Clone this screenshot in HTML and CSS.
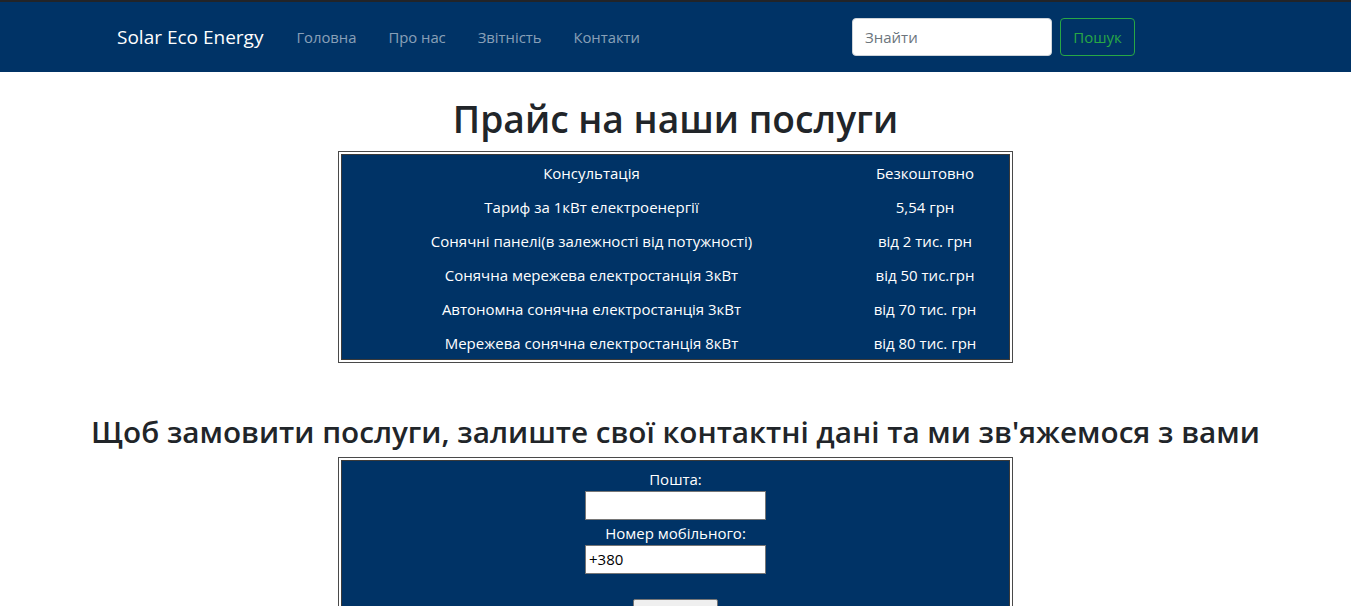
FILE: index.html
```html
<!DOCTYPE html>
<html lang="uk">
<head>
<meta charset="utf-8">
<title>Solar Eco Energy</title>
<link rel="stylesheet" href="styles.css">
</head>
<body>
<header class="navbar">
  <a class="brand" href="#">Solar Eco Energy</a>
  <nav class="nav">
    <a class="nav-link" href="#">Головна</a>
    <a class="nav-link" href="#">Про нас</a>
    <a class="nav-link" href="#">Звітність</a>
    <a class="nav-link" href="#">Контакти</a>
  </nav>
  <form class="search">
    <input class="search-input" type="search" placeholder="Знайти">
    <button class="search-btn" type="button">Пошук</button>
  </form>
</header>
<main class="main">
  <h1 class="title">Прайс на наши послуги</h1>
  <div class="frame">
    <table class="prices">
      <tr><td class="c1">Консультація</td><td class="c2">Безкоштовно</td></tr>
      <tr><td class="c1">Тариф за 1кВт електроенергії</td><td class="c2">5,54 грн</td></tr>
      <tr><td class="c1">Сонячні панелі(в залежності від потужності)</td><td class="c2">від 2 тис. грн</td></tr>
      <tr><td class="c1">Сонячна мережева електростанція 3кВт</td><td class="c2">від 50 тис.грн</td></tr>
      <tr><td class="c1">Автономна сонячна електростанція 3кВт</td><td class="c2">від 70 тис. грн</td></tr>
      <tr><td class="c1">Мережева сонячна електростанція 8кВт</td><td class="c2">від 80 тис. грн</td></tr>
    </table>
  </div>
  <h2 class="subtitle">Щоб замовити послуги, залиште свої контактні дані та ми зв'яжемося з вами</h2>
  <div class="frame">
    <form class="order">
      <label class="lbl" for="mail">Пошта:</label>
      <input class="fld" id="mail" type="text">
      <label class="lbl" for="phone">Номер мобільного:</label>
      <input class="fld" id="phone" type="text" value="+380">
      <button class="send" type="button">Надіслати</button>
    </form>
  </div>
</main>
</body>
</html>
```
FILE: styles.css
```css
html, body {
  margin: 0;
  padding: 0;
}
body {
  font-family: "Open Sans", "Noto Sans", sans-serif;
  color: #212529;
  background: #fff;
  font-size: 16px;
  line-height: 1.5;
}
.navbar {
  display: flex;
  align-items: center;
  height: 70px;
  background: #003366;
  border-top: 2px solid #222428;
  padding-left: 117px;
}
.brand {
  color: #fff;
  font-size: 19px;
  text-decoration: none;
  margin-right: 17px;
  white-space: nowrap;
}
.nav {
  display: flex;
}
.nav-link {
  color: rgba(255, 255, 255, 0.55);
  text-decoration: none;
  padding: 0 16px;
  font-size: 14.8px;
  white-space: nowrap;
}
.search {
  margin-left: auto;
  margin-right: 216px;
  display: flex;
  align-items: center;
}
.search-input {
  box-sizing: border-box;
  width: 200px;
  height: 38px;
  border: 1px solid #ced4da;
  border-radius: 4px;
  padding: 6px 12px;
  font-family: inherit;
  font-size: 15px;
}
.search-input::placeholder {
  color: #6c757d;
}
.search-btn {
  box-sizing: border-box;
  margin-left: 8px;
  width: 75px;
  height: 38px;
  padding: 6px 8px;
  border: 1px solid #28a745;
  border-radius: 4px;
  background: transparent;
  color: #28a745;
  font-family: inherit;
  font-size: 15px;
}
.main {
  display: flex;
  flex-direction: column;
  align-items: center;
}
.title {
  margin: 25px 0 9px;
  font-size: 37.2px;
  font-weight: 600;
  line-height: 1.2;
}
.frame {
  width: 667px;
  border: 1px solid #3a3a3a;
  box-shadow: 0 0 0 2px #fff, 0 0 0 3px #4a4a4a;
  background: #003366;
  color: #fff;
  margin-top: 3px;
}
.prices {
  width: 100%;
  border-collapse: collapse;
}
.prices td {
  box-sizing: border-box;
  height: 34px;
  padding: 2px 0 0;
  text-align: center;
  font-size: 15px;
  line-height: 20px;
}
.c1 {
  width: 499px;
}
.subtitle {
  margin: 54px 0 8px;
  font-size: 29.7px;
  font-weight: 600;
  line-height: 1.2;
}
.order {
  display: flex;
  flex-direction: column;
  align-items: center;
  padding-top: 7px;
  height: 160px;
}
.lbl {
  font-size: 15px;
  line-height: 23px;
}
.fld {
  box-sizing: border-box;
  width: 181px;
  height: 29px;
  border: 1px solid #767676;
  padding: 1px 3px;
  font-family: inherit;
  font-size: 15px;
  color: #000;
  margin-bottom: 2px;
}
.send {
  margin-top: 23px;
  width: 85px;
  height: 30px;
  background: #efefef;
  border: 1px solid #767676;
  border-radius: 2px;
  font-family: inherit;
  font-size: 15px;
}
```
